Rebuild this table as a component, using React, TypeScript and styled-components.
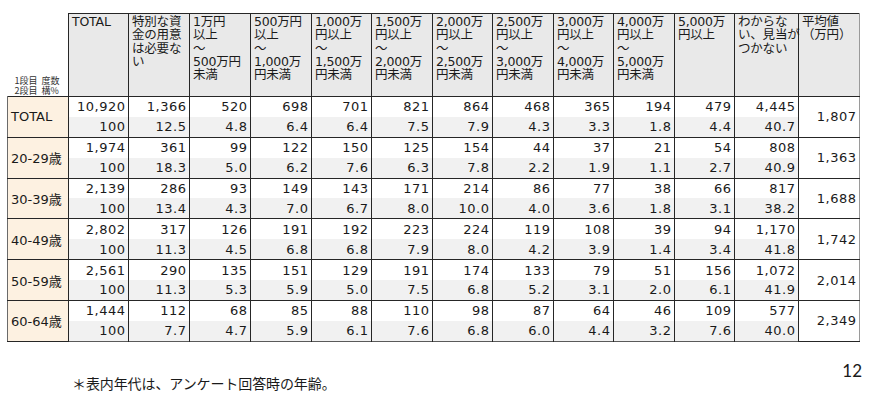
import React from "react";
import styled, { createGlobalStyle } from "styled-components";

const GlobalStyle = createGlobalStyle`
  html, body {
    margin: 0;
    padding: 0;
    background: #ffffff;
  }
  body {
    font-family: "DejaVu Sans", "Noto Sans CJK JP", sans-serif;
    color: #1a1a1a;
  }
`;

const Page = styled.div`
  width: 870px;
  height: 407px;
  padding: 13px 0 0 7px;
  box-sizing: border-box;
  display: flex;
  flex-direction: column;
`;

const Table = styled.table`
  width: 852px;
  table-layout: fixed;
  border-collapse: collapse;
`;

const HeadCell = styled.th`
  background: #e9e9e9;
  border: 1px solid #262626;
  border-right-color: ${(p) => (p.$last ? "#9a9a9a" : "#262626")};
  height: 81px;
  padding: 1px 0 0 3px;
  vertical-align: top;
  text-align: left;
  font-weight: normal;
  font-family: "DejaVu Sans", "Noto Sans CJK JP", sans-serif;
  font-size: 12.5px;
  line-height: 13.3px;
  letter-spacing: -0.2px;
  white-space: nowrap;
`;

const CornerCell = styled.th`
  vertical-align: bottom;
  text-align: left;
  font-weight: normal;
  padding: 0 0 1px 7px;
  font-family: "Noto Sans CJK JP", sans-serif;
  font-size: 9px;
  line-height: 9.5px;
  color: #333;
  white-space: pre;
`;

const LabelCell = styled.td`
  background: #fdf1e1;
  border: 1px solid #262626;
  border-left-color: #6a6a6a;
  padding: 0 0 0 3px;
  font-family: "DejaVu Sans", "Noto Sans CJK JP", sans-serif;
  font-size: 13px;
  letter-spacing: 0px;
  white-space: nowrap;
`;

const NumCell = styled.td`
  background: ${(p) => (p.$shade ? "#f1f1f1" : "#ffffff")};
  border-left: 1px solid #262626;
  border-right: 1px solid #262626;
  height: 19.9px;
  padding: 0 2.5px 0 0;
  text-align: right;
  font-family: "DejaVu Sans", sans-serif;
  font-size: 13px;
  line-height: 19px;
  letter-spacing: 0.5px;
  white-space: nowrap;
`;

const MeanCell = styled.td`
  background: #ffffff;
  border: 1px solid #262626;
  border-right-color: #9a9a9a;
  padding: 0 2.5px 0 0;
  text-align: right;
  font-family: "DejaVu Sans", sans-serif;
  font-size: 13px;
  letter-spacing: 0.5px;
`;

const GroupRow = styled.tr`
  border-top: 1px solid #262626;
`;

const LastRow = styled.tr`
  border-bottom: 1px solid #5a5a5a;
`;

const Footer = styled.div`
  display: flex;
  justify-content: space-between;
  align-items: flex-start;
  padding: 0 8px 0 65px;
`;

const Note = styled.div`
  margin-top: 31px;
  font-family: "Noto Sans CJK JP", sans-serif;
  font-size: 14px;
  line-height: 20px;
  letter-spacing: -0.1px;
`;

const PageNo = styled.div`
  margin-top: 19px;
  font-family: Lato, "Liberation Sans", sans-serif;
  font-size: 17px;
  line-height: 20px;
`;

const widths = [61, 60, 61, 61, 61, 60, 61, 60, 61, 60, 61, 60, 64, 61];

const headers: string[][] = [
  ["TOTAL"],
  ["特別な資", "金の用意", "は必要な", "い"],
  ["1万円", "以上", "～", "500万円", "未満"],
  ["500万円", "以上", "～", "1,000万", "円未満"],
  ["1,000万", "円以上", "～", "1,500万", "円未満"],
  ["1,500万", "円以上", "～", "2,000万", "円未満"],
  ["2,000万", "円以上", "～", "2,500万", "円未満"],
  ["2,500万", "円以上", "～", "3,000万", "円未満"],
  ["3,000万", "円以上", "～", "4,000万", "円未満"],
  ["4,000万", "円以上", "～", "5,000万", "円未満"],
  ["5,000万", "円以上"],
  ["わからな", "い、見当が", "つかない"],
  ["平均値", "（万円）"],
];

type Group = { label: string; counts: string[]; pct: string[]; mean: string };

const groups: Group[] = [
  {
    label: "TOTAL",
    counts: ["10,920", "1,366", "520", "698", "701", "821", "864", "468", "365", "194", "479", "4,445"],
    pct: ["100", "12.5", "4.8", "6.4", "6.4", "7.5", "7.9", "4.3", "3.3", "1.8", "4.4", "40.7"],
    mean: "1,807",
  },
  {
    label: "20-29歳",
    counts: ["1,974", "361", "99", "122", "150", "125", "154", "44", "37", "21", "54", "808"],
    pct: ["100", "18.3", "5.0", "6.2", "7.6", "6.3", "7.8", "2.2", "1.9", "1.1", "2.7", "40.9"],
    mean: "1,363",
  },
  {
    label: "30-39歳",
    counts: ["2,139", "286", "93", "149", "143", "171", "214", "86", "77", "38", "66", "817"],
    pct: ["100", "13.4", "4.3", "7.0", "6.7", "8.0", "10.0", "4.0", "3.6", "1.8", "3.1", "38.2"],
    mean: "1,688",
  },
  {
    label: "40-49歳",
    counts: ["2,802", "317", "126", "191", "192", "223", "224", "119", "108", "39", "94", "1,170"],
    pct: ["100", "11.3", "4.5", "6.8", "6.8", "7.9", "8.0", "4.2", "3.9", "1.4", "3.4", "41.8"],
    mean: "1,742",
  },
  {
    label: "50-59歳",
    counts: ["2,561", "290", "135", "151", "129", "191", "174", "133", "79", "51", "156", "1,072"],
    pct: ["100", "11.3", "5.3", "5.9", "5.0", "7.5", "6.8", "5.2", "3.1", "2.0", "6.1", "41.9"],
    mean: "2,014",
  },
  {
    label: "60-64歳",
    counts: ["1,444", "112", "68", "85", "88", "110", "98", "87", "64", "46", "109", "577"],
    pct: ["100", "7.7", "4.7", "5.9", "6.1", "7.6", "6.8", "6.0", "4.4", "3.2", "7.6", "40.0"],
    mean: "2,349",
  },
];

const App = () => {
  return (
    <>
      <GlobalStyle />
      <Page>
        <Table>
          <colgroup>
            {widths.map((w, i) => (
              <col key={i} style={{ width: w }} />
            ))}
          </colgroup>
          <thead>
            <tr>
              <CornerCell>{"1段目  度数\n2段目  構%"}</CornerCell>
              {headers.map((lines, i) => (
                <HeadCell key={i} $last={i === headers.length - 1}>
                  {lines.map((l, j) => (
                    <div key={j}>{l}</div>
                  ))}
                </HeadCell>
              ))}
            </tr>
          </thead>
          <tbody>
            {groups.map((g, gi) => {
              const SecondRow = gi === groups.length - 1 ? LastRow : "tr";
              return (
                <React.Fragment key={g.label}>
                  <GroupRow>
                    <LabelCell rowSpan={2}>{g.label}</LabelCell>
                    {g.counts.map((v, i) => (
                      <NumCell key={i}>{v}</NumCell>
                    ))}
                    <MeanCell rowSpan={2}>{g.mean}</MeanCell>
                  </GroupRow>
                  <SecondRow>
                    {g.pct.map((v, i) => (
                      <NumCell key={i} $shade>
                        {v}
                      </NumCell>
                    ))}
                  </SecondRow>
                </React.Fragment>
              );
            })}
          </tbody>
        </Table>
        <Footer>
          <Note>＊表内年代は、アンケート回答時の年齢。</Note>
          <PageNo>12</PageNo>
        </Footer>
      </Page>
    </>
  );
};

export default App;
